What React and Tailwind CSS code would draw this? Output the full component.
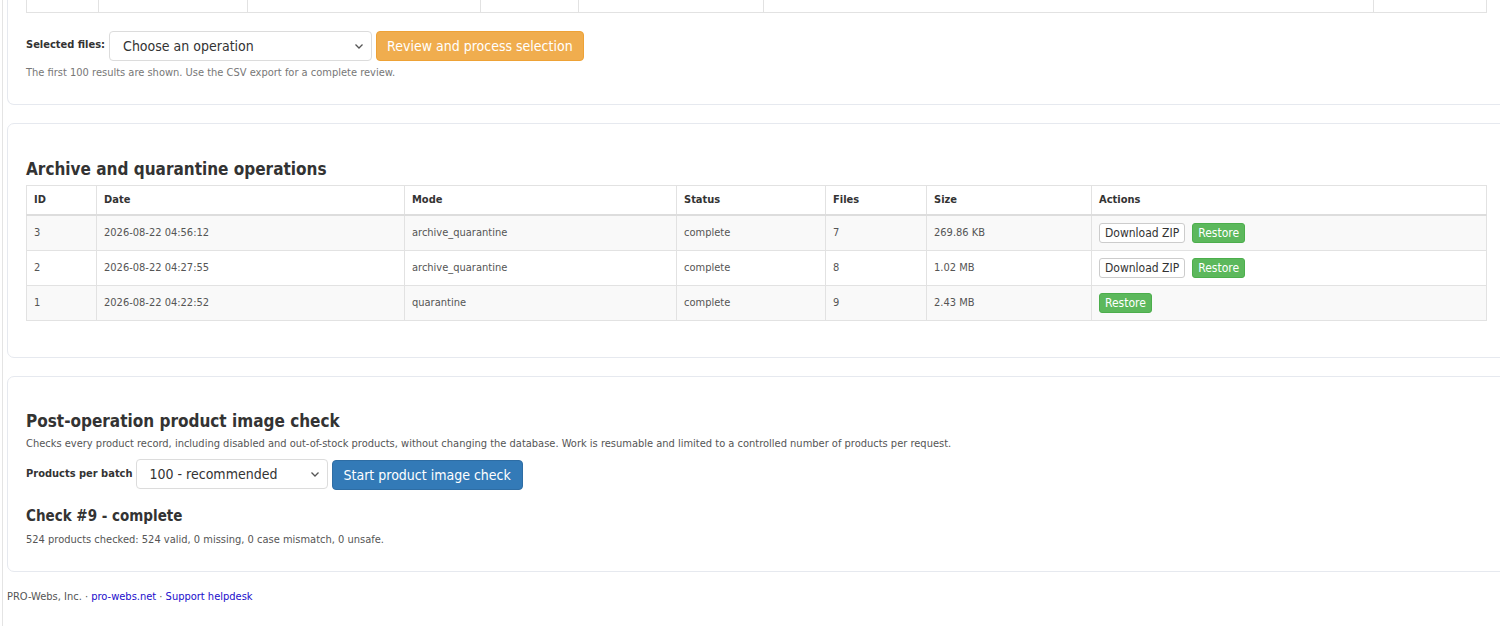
import { useState } from 'react'

const FONT = "font-['DejaVu_Sans_Condensed','DejaVu_Sans',sans-serif]"

const operations = [
  { id: 3, date: '2026-08-22 04:56:12', mode: 'archive_quarantine', status: 'complete', files: 7, size: '269.86 KB', zip: true },
  { id: 2, date: '2026-08-22 04:27:55', mode: 'archive_quarantine', status: 'complete', files: 8, size: '1.02 MB', zip: true },
  { id: 1, date: '2026-08-22 04:22:52', mode: 'quarantine', status: 'complete', files: 9, size: '2.43 MB', zip: false },
]

function Chevron() {
  return (
    <svg width="10" height="10" viewBox="0 0 10 10" className="pointer-events-none absolute right-[8px] top-1/2 -translate-y-1/2">
      <path d="M1.5 3.5 L5 7 L8.5 3.5" fill="none" stroke="#555" strokeWidth="1.3" />
    </svg>
  )
}

function Select({ value, options, className }) {
  const [val, setVal] = useState(value)
  return (
    <div className={`relative ${className}`}>
      <select
        value={val}
        onChange={(e) => setVal(e.target.value)}
        className="w-full h-full appearance-none bg-white border border-[#dcdcdc] rounded-[4px] pl-[13px] pr-6 text-[14px] text-[#333] outline-none"
      >
        {options.map((o) => <option key={o}>{o}</option>)}
      </select>
      <Chevron />
    </div>
  )
}

function Panel({ children, className = '' }) {
  return (
    <section className={`ml-[7px] w-[1500px] bg-white border border-[#e6e9ef] rounded-[7px] pl-[18px] ${className}`}>
      {children}
    </section>
  )
}

export default function App() {
  return (
    <div className={`${FONT} relative w-[1500px] h-[626px] overflow-hidden bg-white text-[#333]`}>
      {/* left page edge */}
      <div className="absolute left-[2px] top-0 bottom-0 w-px bg-[#e4e4e4]" />

      {/* Panel cut by the top of the window */}
      <Panel className="border-t-0 rounded-t-none pb-[22px]">
        <div className="flex w-[1461px] h-[13px] border border-t-0 border-[#e2e2e2]">
          <div className="w-[72px] border-r border-[#e2e2e2]" />
          <div className="w-[149px] border-r border-[#e2e2e2]" />
          <div className="w-[233px] border-r border-[#e2e2e2]" />
          <div className="w-[98px] border-r border-[#e2e2e2]" />
          <div className="w-[185px] border-r border-[#e2e2e2]" />
          <div className="w-[610px] border-r border-[#e2e2e2]" />
          <div className="flex-1" />
        </div>

        <div className="flex items-center mt-[18px]">
          <span className="text-[11px] font-bold text-[#333] mr-[4px] -mt-[2px]">Selected files:</span>
          <Select value="Choose an operation" options={['Choose an operation', 'Archive', 'Quarantine', 'Archive and quarantine']} className="w-[263px] h-[30px]" />
          <button className="ml-[4px] h-[30px] px-[10px] rounded-[4px] bg-[#f0ad4e] border border-[#eea236] text-white text-[14px]">
            Review and process selection
          </button>
        </div>
        <p className="text-[11px] text-[#777] mt-[4px]">The first 100 results are shown. Use the CSV export for a complete review.</p>
      </Panel>

      {/* Archive and quarantine operations */}
      <Panel className="mt-[18px] pt-[34px] pb-[36px]">
        <h2 className="text-[17px] font-bold text-[#333] leading-[22px] mb-[5px]">Archive and quarantine operations</h2>
        <table className="w-[1461px] border-collapse text-[11px]">
          <thead>
            <tr className="h-[30px] text-left">
              {[
                ['ID', 'w-[70px]'],
                ['Date', 'w-[308px]'],
                ['Mode', 'w-[272px]'],
                ['Status', 'w-[149px]'],
                ['Files', 'w-[101px]'],
                ['Size', 'w-[165px]'],
                ['Actions', ''],
              ].map(([h, w]) => (
                <th key={h} className={`${w} border border-[#e2e2e2] border-b-2 border-b-[#dddddd] px-[7px] font-bold text-[#333]`}>{h}</th>
              ))}
            </tr>
          </thead>
          <tbody>
            {operations.map((op, i) => (
              <tr key={op.id} className={`h-[35px] align-top ${i % 2 === 0 ? 'bg-[#f9f9f9]' : 'bg-white'}`}>
                <td className="border border-[#e2e2e2] px-[7px] pt-[9px] text-[#555]">{op.id}</td>
                <td className="border border-[#e2e2e2] px-[7px] pt-[9px] text-[#555]">{op.date}</td>
                <td className="border border-[#e2e2e2] px-[7px] pt-[9px] text-[#555]">{op.mode}</td>
                <td className="border border-[#e2e2e2] px-[7px] pt-[9px] text-[#555]">{op.status}</td>
                <td className="border border-[#e2e2e2] px-[7px] pt-[9px] text-[#555]">{op.files}</td>
                <td className="border border-[#e2e2e2] px-[7px] pt-[9px] text-[#555]">{op.size}</td>
                <td className="border border-[#e2e2e2] px-[7px] align-middle">
                  <div className="flex items-center gap-[7px]">
                    {op.zip && (
                      <button className="h-[20px] px-[5px] bg-white border border-[#cccccc] rounded-[3px] text-[12px] text-[#333]">Download ZIP</button>
                    )}
                    <button className="h-[20px] px-[5px] bg-[#5cb85c] border border-[#4cae4c] rounded-[3px] text-[12px] text-white">Restore</button>
                  </div>
                </td>
              </tr>
            ))}
          </tbody>
        </table>
      </Panel>

      {/* Post-operation product image check */}
      <Panel className="mt-[18px] pt-[33px] pb-[22px]">
        <h2 className="text-[17px] font-bold text-[#333] leading-[22px]">Post-operation product image check</h2>
        <p className="text-[11px] text-[#555] mt-[4px]">
          Checks every product record, including disabled and out-of-stock products, without changing the database. Work is resumable and limited to a controlled number of products per request.
        </p>
        <div className="flex items-center mt-[6px]">
          <span className="text-[11px] font-bold text-[#333] mr-[3px]">Products per batch</span>
          <Select value="100 - recommended" options={['25', '50', '100 - recommended', '250']} className="w-[192px] h-[30px]" />
          <button className="ml-[4px] mt-[2px] h-[30px] px-[11px] rounded-[4px] bg-[#337ab7] border border-[#2e6da4] text-white text-[14px]">
            Start product image check
          </button>
        </div>
        <h3 className="text-[15px] font-bold text-[#333] mt-[16px] leading-[20px]">Check #9 - complete</h3>
        <p className="text-[11px] text-[#555] mt-[6px]">524 products checked: 524 valid, 0 missing, 0 case mismatch, 0 unsafe.</p>
      </Panel>

      <footer className="ml-[7px] mt-[17px] text-[11px] text-[#555]">
        PRO-Webs, Inc. · <a href="#" className="text-[#1a0dcc]">pro-webs.net</a> · <a href="#" className="text-[#1a0dcc]">Support helpdesk</a>
      </footer>
    </div>
  )
}
